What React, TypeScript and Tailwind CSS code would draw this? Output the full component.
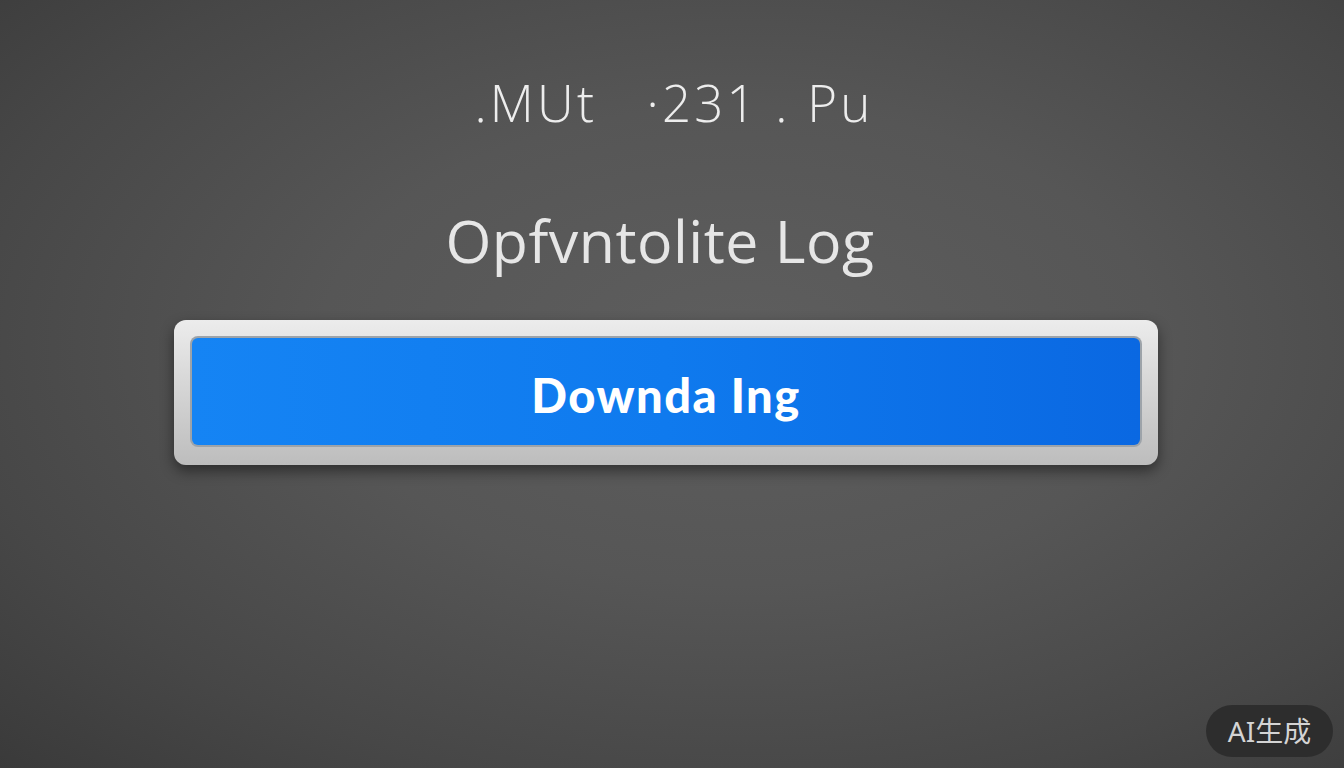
import React from "react";

export default function App() {
  return (
    <div className="relative w-full h-[768px] overflow-hidden bg-[radial-gradient(ellipse_at_55%_45%,#5e5e5e_0%,#565656_40%,#474747_75%,#3a3a3a_100%)] flex flex-col items-center font-['Open_Sans','Noto_Sans',sans-serif]">
      <div className="mt-[70px] h-[64px] leading-[64px] text-[51px] font-light text-[#ededed] tracking-[3.2px] whitespace-pre ml-[4px]">
        .MUt{"   "}·231 . Pu
      </div>
      <div className="mt-[70px] h-[72px] leading-[72px] text-[59px] font-normal text-[#e6e6e6] tracking-[0.5px] whitespace-pre ml-[-24px]">
        Opfvntolite Log
      </div>
      <div className="mt-[44px] w-[984px] h-[145px] rounded-[12px] bg-[linear-gradient(180deg,#ececec_0%,#d6d6d6_45%,#bdbdbd_100%)] p-[16px] pb-[18px] shadow-[0_6px_14px_rgba(0,0,0,0.45)] ml-[-12px]">
        <div className="w-full h-full rounded-[8px] bg-[#9da3a9] p-[2px]">
          <div className="w-full h-full rounded-[6px] bg-[linear-gradient(90deg,#1584f4_0%,#0f7aee_50%,#0a68e2_100%)] flex items-center justify-center pt-[8px]">
            <span className="text-[47px] font-black text-white tracking-[1.5px] whitespace-pre font-['Lato','Open_Sans',sans-serif]">
              Downda Ing
            </span>
          </div>
        </div>
      </div>
      <div className="absolute right-[11px] bottom-[11px] w-[127px] h-[52px] rounded-full bg-[#2c2c2c]/95 flex items-center justify-center text-[28px] text-[#d4d4d4] font-['Noto_Sans','Noto_Sans_CJK_SC',sans-serif]">
        AI生成
      </div>
    </div>
  );
}
